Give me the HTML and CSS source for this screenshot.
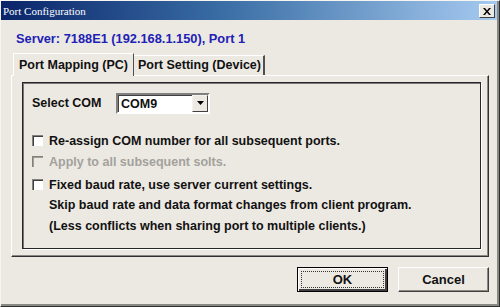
FILE: index.html
```html
<!DOCTYPE html>
<html lang="en">
<head>
    <meta charset="UTF-8">
    <title>Port Configuration</title>
    <link rel="stylesheet" href="styles.css">
</head>
<body>
    <div class="window">
        <div class="titlebar">
            <span class="title">Port Configuration</span>
            <button class="close" aria-label="Close">
                <svg width="8" height="7" viewBox="0 0 8 7">
                    <path d="M0 0h2l2 2.5 2-2.5h2l-3 3.5 3 3.5h-2l-2-2.5-2 2.5h-2l3-3.5z" fill="#000"/>
                </svg>
            </button>
        </div>

        <div class="content">
            <div class="server">Server: 7188E1 (192.168.1.150), Port 1</div>

            <div class="tabs">
                <div class="tab active">Port Mapping (PC)</div>
                <div class="tab">Port Setting (Device)</div>
            </div>

            <div class="panel">
                <div class="groupbox">
                    <div class="com-row">
                        <span class="com-label">Select COM</span>
                        <div class="combo">
                            <span class="combo-value">COM9</span>
                            <span class="combo-btn">
                                <svg width="7" height="4" viewBox="0 0 7 4"><path d="M0 0h7l-3.5 4z" fill="#000"/></svg>
                            </span>
                        </div>
                    </div>

                    <label class="check first"><span class="box"></span>Re-assign COM number for all subsequent ports.</label>
                    <label class="check disabled"><span class="box"></span>Apply to all subsequent solts.</label>
                    <label class="check gap"><span class="box"></span>Fixed baud rate, use server current settings.</label>
                    <div class="note">Skip baud rate and data format changes from client program.</div>
                    <div class="note">(Less conflicts when sharing port to multiple clients.)</div>
                </div>
            </div>

            <div class="buttons">
                <button class="btn default"><span class="focus">OK</span></button>
                <button class="btn">Cancel</button>
            </div>
        </div>
    </div>
</body>
</html>
```

FILE: styles.css
```css
* {
    box-sizing: border-box;
}
body {
    margin: 0;
    background-color: #ece9e3;
    font-family: "Liberation Sans", Arial, sans-serif;
    font-size: 12.5px;
    font-weight: bold;
    color: #111;
}
.window {
    width: 500px;
    height: 307px;
    background-color: #ece9e3;
    border: 1px solid;
    border-color: #f6f5f1 #303030 #303030 #f6f5f1;
    box-shadow: inset -2px -2px 0 #8a8883;
    padding: 0 2px 0 0;
}
.titlebar {
    height: 19px;
    display: flex;
    align-items: center;
    justify-content: space-between;
    background: linear-gradient(to right, #0a246a 0%, #3a6ea5 45%, #a6caf0 100%);
    padding: 0 2px 0 2px;
}
.title {
    font-family: "Liberation Serif", "Times New Roman", serif;
    font-weight: normal;
    font-size: 11px;
    color: #fff;
}
.close {
    width: 16px;
    height: 14px;
    padding: 0;
    display: flex;
    align-items: center;
    justify-content: center;
    background-color: #ece9e3;
    border: 1px solid;
    border-color: #fff #404040 #404040 #fff;
    margin-top: 1px;
}
.content {
    padding: 0 8px 0 10px;
}
.server {
    color: #2121b5;
    font-size: 12.8px;
    margin: 11px 0 0 5px;
    height: 16px;
    line-height: 16px;
}
.tabs {
    display: flex;
    align-items: flex-end;
    margin: 6px 0 0 2px;
    position: relative;
    z-index: 1;
}
.tab {
    height: 20px;
    line-height: 19px;
    padding: 0 2px 0 4px;
    border-top: 1px solid #fff;
    border-right: 2px solid #505050;
    background-color: #ece9e3;
}
.tab.active {
    height: 23px;
    line-height: 22px;
    padding: 0 5px 0 5px;
    border-left: 1px solid #fff;
    border-right: 1px solid #505050;
    margin-bottom: -1px;
}
.panel {
    border: 1px solid;
    border-color: #fff #303030 #303030 #fff;
    box-shadow: inset -1px -1px 0 #8a8883;
    padding: 6px 7px 7px 10px;
    height: 182px;
}
.groupbox {
    border: 1px solid #262626;
    box-shadow: 1px 1px 0 #fff, inset 1px 1px 0 #777;
    height: 167px;
    padding: 10px 8px 0 9px;
}
.com-row {
    display: flex;
    align-items: center;
    height: 20px;
}
.com-label {
    width: 84px;
}
.combo {
    width: 94px;
    height: 21px;
    display: flex;
    align-items: stretch;
    background-color: #fff;
    border: 2px solid;
    border-color: #808080 #fff #fff #808080;
    box-shadow: inset 1px 1px 0 #404040;
}
.combo-value {
    flex: 1;
    padding: 1px 0 0 3px;
    line-height: 16px;
}
.combo-btn {
    width: 16px;
    display: flex;
    align-items: center;
    justify-content: center;
    background-color: #ece9e3;
    border: 1px solid;
    border-color: #f4f3ef #404040 #404040 #f4f3ef;
}
.check {
    display: flex;
    align-items: center;
    height: 21px;
}
.check.first {
    margin-top: 17px;
}
.check.gap {
    margin-top: 2px;
}
.box {
    width: 11px;
    height: 11px;
    margin-right: 6px;
    background-color: #fff;
    border-top: 1px solid #808080;
    border-left: 1px solid #808080;
    box-shadow: inset 1px 1px 0 #404040;
}
.check.disabled {
    color: #a3a19c;
}
.check.disabled .box {
    background-color: #ece9e3;
    box-shadow: inset 1px 1px 0 #a09e99;
}
.note {
    height: 21px;
    line-height: 21px;
    padding-left: 17px;
}
.buttons {
    display: flex;
    justify-content: flex-end;
    gap: 10px;
    margin-top: 10px;
}
.btn {
    width: 91px;
    height: 25px;
    padding: 0;
    font-family: inherit;
    font-size: 13px;
    font-weight: bold;
    color: #111;
    background-color: #ece9e3;
    border: 1px solid;
    border-color: #fff #404040 #404040 #fff;
    box-shadow: inset -1px -1px 0 #8a8883;
}
.btn.default {
    border: 1px solid #000;
    box-shadow: inset 1px 1px 0 #fff, inset -2px -2px 0 #404040;
    padding: 3px;
}
.focus {
    display: block;
    height: 100%;
    line-height: 15px;
    border: 1px dotted #333;
}
```
